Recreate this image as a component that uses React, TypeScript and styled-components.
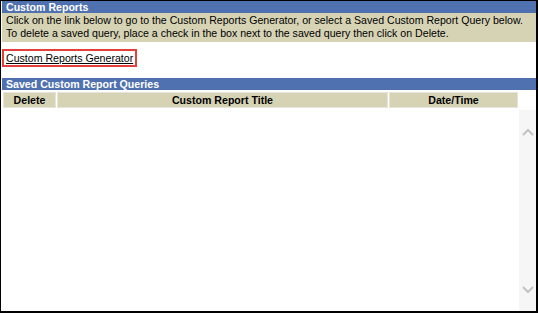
import styled, { createGlobalStyle } from "styled-components";

const GlobalStyle = createGlobalStyle`
  html, body {
    margin: 0;
    padding: 0;
    background: #ffffff;
  }
  body {
    font-family: "Liberation Sans", Arial, sans-serif;
  }
`;

const columns = [
  { key: "delete", label: "Delete" },
  { key: "title", label: "Custom Report Title" },
  { key: "date", label: "Date/Time" },
];

const App = () => {
  return (
    <>
      <GlobalStyle />
      <Frame>
        <SectionBar>Custom Reports</SectionBar>
        <Instructions>
          Click on the link below to go to the Custom Reports Generator, or select a Saved Custom Report Query below.
          <br />
          To delete a saved query, place a check in the box next to the saved query then click on Delete.
        </Instructions>
        <LinkRow>
          <HighlightBox>
            <GeneratorLink href="#">Custom Reports Generator</GeneratorLink>
          </HighlightBox>
        </LinkRow>
        <SectionBar>Saved Custom Report Queries</SectionBar>
        <HeaderRow>
          {columns.map((c) => (
            <HeaderCell key={c.key}>{c.label}</HeaderCell>
          ))}
        </HeaderRow>
        <ScrollArea>
          <Rows />
          <ScrollTrack>
            <svg width="12" height="8" viewBox="0 0 12 8">
              <path d="M1 7 L6 2 L11 7" fill="none" stroke="#c2c2c2" strokeWidth="2" />
            </svg>
            <svg width="12" height="8" viewBox="0 0 12 8">
              <path d="M1 1 L6 6 L11 1" fill="none" stroke="#c2c2c2" strokeWidth="2" />
            </svg>
          </ScrollTrack>
        </ScrollArea>
      </Frame>
    </>
  );
};

const Frame = styled.div`
  box-sizing: border-box;
  width: 538px;
  height: 313px;
  border-style: solid;
  border-color: #000000;
  border-width: 1px 2px 2px 1px;
  padding: 0 0 0 1px;
  display: flex;
  flex-direction: column;
  background: #ffffff;
`;

const SectionBar = styled.div`
  height: 12px;
  line-height: 12px;
  background: #5071b0;
  color: #ffffff;
  font-weight: bold;
  font-size: 10.6px;
  padding-left: 4px;
  white-space: nowrap;
`;

const Instructions = styled.div`
  background: #d6d3b5;
  color: #000000;
  font-size: 10.6px;
  line-height: 13px;
  padding: 1px 4px 2px;
  white-space: nowrap;
`;

const LinkRow = styled.div`
  display: flex;
  padding: 7px 0 11px 0;
`;

const HighlightBox = styled.div`
  border: 2px solid #e2403b;
  height: 14px;
  padding: 0 2px;
  display: flex;
  align-items: center;
`;

const GeneratorLink = styled.a`
  color: #000000;
  font-size: 10.6px;
  text-decoration: underline;
`;

const HeaderRow = styled.div`
  display: grid;
  grid-template-columns: 53px 1fr 129px;
  gap: 1px;
  margin: 2px 18px 0 1px;
`;

const HeaderCell = styled.div`
  background: #d6d3b5;
  border: 1px solid #e6e4da;
  height: 14px;
  line-height: 14px;
  text-align: center;
  font-weight: bold;
  font-size: 10.6px;
  color: #000000;
`;

const ScrollArea = styled.div`
  flex: 1;
  display: flex;
  margin-top: 2px;
`;

const Rows = styled.div`
  flex: 1;
`;

const ScrollTrack = styled.div`
  width: 17px;
  background: #f6f6f6;
  display: flex;
  flex-direction: column;
  justify-content: space-between;
  align-items: center;
  padding: 18px 0 17px;
`;

export default App;
